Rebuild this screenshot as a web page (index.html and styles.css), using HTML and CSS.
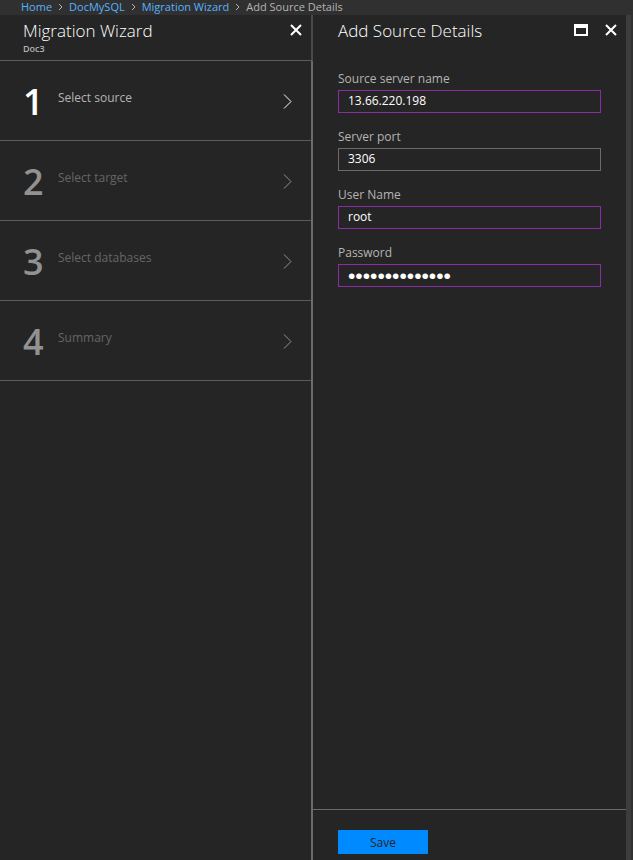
FILE: index.html
```html
<!DOCTYPE html>
<html lang="en">
<head>
  <meta charset="utf-8">
  <meta name="viewport" content="width=device-width, initial-scale=1">
  <title>Add Source Details</title>
  <link rel="stylesheet" href="styles.css">
</head>
<body>
  <nav class="breadcrumb" aria-label="Breadcrumb">
    <a href="#">Home</a>
    <svg class="crumb-arrow" viewBox="0 0 5 8" aria-hidden="true"><path d="M1 1l3 3-3 3"/></svg>
    <a href="#">DocMySQL</a>
    <svg class="crumb-arrow" viewBox="0 0 5 8" aria-hidden="true"><path d="M1 1l3 3-3 3"/></svg>
    <a href="#">Migration Wizard</a>
    <svg class="crumb-arrow" viewBox="0 0 5 8" aria-hidden="true"><path d="M1 1l3 3-3 3"/></svg>
    <span>Add Source Details</span>
  </nav>
  <main class="blades">
    <section class="blade wizard">
      <header class="blade-header wizard-header">
        <div class="titles">
          <h1>Migration Wizard</h1>
          <p>Doc3</p>
        </div>
        <button class="icon-button" type="button" aria-label="Close wizard">
          <svg class="close-icon" viewBox="0 0 12 12" aria-hidden="true"><path d="M1 1l10 10M11 1L1 11"/></svg>
        </button>
      </header>
      <div class="steps">
        <button class="step active" type="button">
          <span class="number">1</span><span class="step-name">Select source</span>
          <svg class="step-arrow" viewBox="0 0 9 15" aria-hidden="true"><path d="M1 .5l7 7-7 7"/></svg>
        </button>
        <button class="step" type="button">
          <span class="number">2</span><span class="step-name">Select target</span>
          <svg class="step-arrow" viewBox="0 0 9 15" aria-hidden="true"><path d="M1 .5l7 7-7 7"/></svg>
        </button>
        <button class="step" type="button">
          <span class="number">3</span><span class="step-name">Select databases</span>
          <svg class="step-arrow" viewBox="0 0 9 15" aria-hidden="true"><path d="M1 .5l7 7-7 7"/></svg>
        </button>
        <button class="step" type="button">
          <span class="number">4</span><span class="step-name">Summary</span>
          <svg class="step-arrow" viewBox="0 0 9 15" aria-hidden="true"><path d="M1 .5l7 7-7 7"/></svg>
        </button>
      </div>
    </section>
    <form class="blade details">
      <header class="blade-header details-header">
        <h1>Add Source Details</h1>
        <button class="icon-button" type="button" aria-label="Maximize">
          <svg class="maximize-icon" viewBox="0 0 14 12" aria-hidden="true"><path fill-rule="evenodd" d="M0 0h14v12H0zM2 4v6h10V4z"/></svg>
        </button>
        <button class="icon-button" type="button" aria-label="Close details">
          <svg class="close-icon" viewBox="0 0 12 12" aria-hidden="true"><path d="M1 1l10 10M11 1L1 11"/></svg>
        </button>
      </header>
      <div class="fields">
        <div class="field">
          <label for="server">Source server name</label>
          <input class="edited" id="server" type="text" value="13.66.220.198">
        </div>
        <div class="field">
          <label for="port">Server port</label>
          <input id="port" type="text" value="3306">
        </div>
        <div class="field">
          <label for="user">User Name</label>
          <input class="edited" id="user" type="text" value="root">
        </div>
        <div class="field">
          <label for="password">Password</label>
          <input class="edited" id="password" type="password" value="abcdefghijklmn">
        </div>
      </div>
      <footer class="actions">
        <button class="save" type="submit">Save</button>
      </footer>
    </form>
    <div class="edge"></div>
  </main>
</body>
</html>
```

FILE: styles.css
```css
* {
  box-sizing: border-box;
}

body {
  display: flex;
  flex-direction: column;
  min-height: 100vh;
  margin: 0;
  background: #252525;
  color: #b4b4b4;
  font: 12px/16px "Segoe UI", "Open Sans", "Noto Sans", sans-serif;
}

button,
input {
  margin: 0;
  border: 0;
  border-radius: 0;
  background: none;
  color: inherit;
  font: inherit;
}

h1,
p {
  margin: 0;
}

h1 {
  color: #fff;
  font-size: 17px;
  font-weight: 300;
  line-height: 26px;
}

svg {
  display: block;
  flex: none;
  fill: none;
  stroke: currentColor;
}

.breadcrumb {
  display: flex;
  align-items: center;
  gap: 6px;
  height: 15px;
  padding-bottom: 2px;
  padding-left: 21px;
  background: #303030;
  font-size: 11px;
  line-height: 13px;
  white-space: nowrap;
}

.breadcrumb a {
  color: #55b3ff;
  text-decoration: none;
}

.crumb-arrow {
  width: 5px;
  height: 8px;
}

.blades {
  display: grid;
  grid-template-columns: minmax(0, 313fr) minmax(0, 313fr) 7px;
  flex: 1;
}

.blade {
  display: flex;
  flex-direction: column;
}

.blade-header {
  display: flex;
  align-items: flex-start;
  padding-top: 3px;
}

.wizard-header {
  height: 46px;
  padding-right: 3px;
  padding-left: 23px;
  border-right: 2px solid #4a4a4a;
  border-bottom: 1px solid #5c5c5c;
}

.titles,
.details-header h1 {
  flex: 1;
}

.titles p {
  font-size: 9px;
  font-weight: 600;
  line-height: 10px;
}

.icon-button {
  display: grid;
  place-items: center;
  width: 24px;
  height: 24px;
  padding: 0;
  color: #fff;
}

.close-icon {
  width: 12px;
  height: 12px;
  stroke-width: 2;
}

.maximize-icon {
  width: 14px;
  height: 12px;
  fill: currentColor;
  stroke: none;
}

.steps {
  flex: 1;
  border-right: 2px solid #6b6b6b;
}

.step {
  display: flex;
  align-items: center;
  width: 100%;
  height: 80px;
  padding: 2px 19px 0 23px;
  border-bottom: 1px solid #5c5c5c;
  color: #666;
  text-align: left;
}

.number {
  width: 35px;
  color: #929292;
  font-size: 36px;
  font-weight: 600;
  line-height: 48px;
}

.step-name {
  flex: 1;
  padding-bottom: 8px;
}

.step-arrow {
  width: 9px;
  height: 15px;
  color: #929292;
}

.active {
  color: #b4b4b4;
}

.active .number,
.active .step-arrow {
  color: #fff;
}

.details-header {
  gap: 6px;
  padding-right: 3px;
  padding-left: 25px;
}

.fields {
  display: grid;
  gap: 16px;
  padding: 27px 25px;
}

.field {
  display: grid;
  gap: 3px;
}

.field input {
  width: 100%;
  height: 23px;
  padding: 0 9px 2px;
  border: 1px solid #6b6b6b;
  color: #fff;
}

.field .edited {
  border-color: #8a2da5;
}

.field input[type="password"] {
  padding-bottom: 0;
  font-family: "Liberation Sans", sans-serif;
  font-size: 21px;
  line-height: 21px;
}

.actions {
  margin-top: auto;
  padding: 20px 25px 6px;
  border-top: 1px solid #6b6b6b;
}

.save {
  display: block;
  width: 90px;
  height: 24px;
  padding: 2px 0 0;
  background: #008aff;
  color: #252525;
}

.edge {
  border-right: 2px solid #303030;
  background: #3d3d3f;
}
```
